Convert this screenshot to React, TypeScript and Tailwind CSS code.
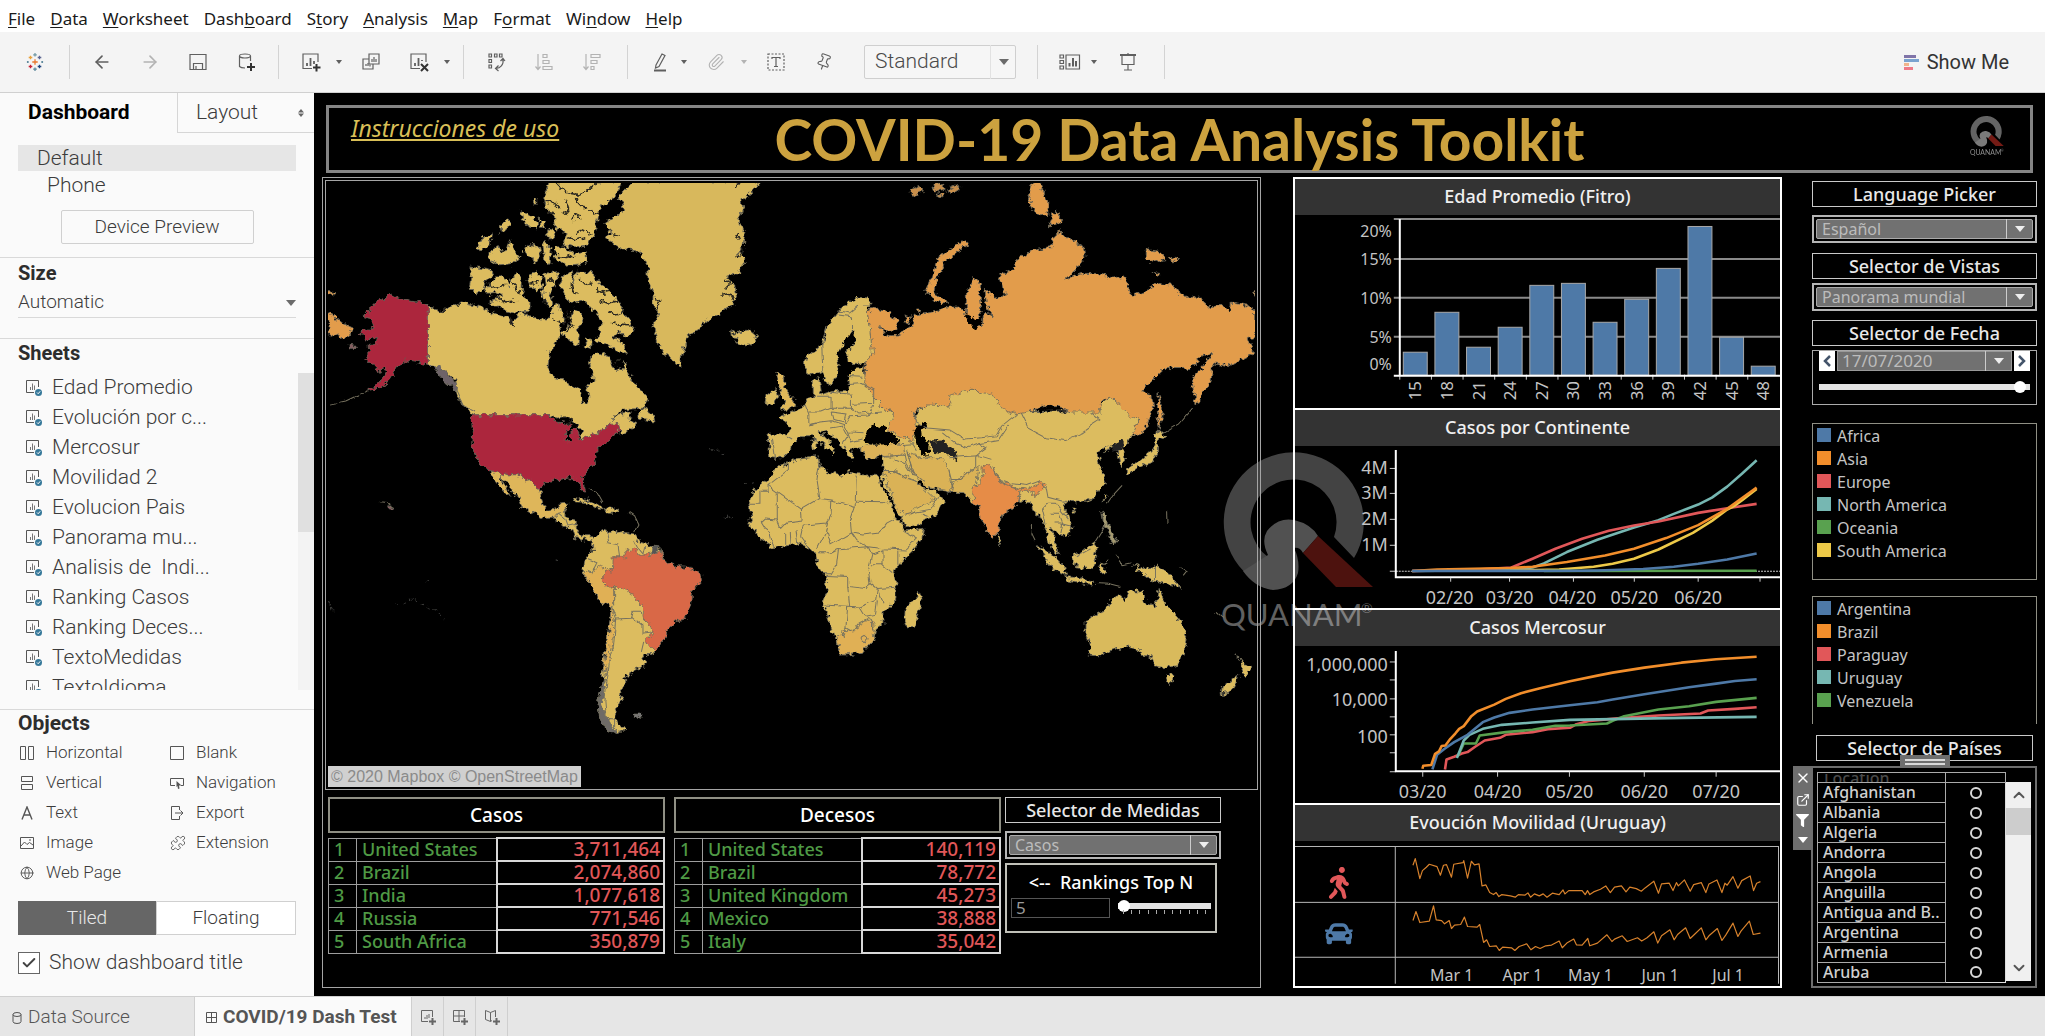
import React from "react";
import { ArrowLeft, ArrowRight, Check, ChevronDown, ChevronUp, ExternalLink, Globe, Paperclip, Pin, Puzzle, X } from "lucide-react";
import { FaCar, FaFilter, FaWalking } from "react-icons/fa";

type Frame = { x: number; y: number; sx: number; sy: number };

const WEST: Frame = { x: 310, y: 175, sx: 3, sy: 2.529 };
const EAST: Frame = { x: 720, y: 175, sx: 2.703, sy: 2.529 };
const UPPER: Frame = { x: 1200, y: 175, sx: 2.613, sy: 3 };
const LOWER: Frame = { x: 1200, y: 600, sx: 2.613, sy: 3 };

function place(points: string, f: Frame) {
  return points
    .split(" ")
    .map((p) => {
      const [x, y] = p.split(",").map(Number);
      return `${(f.x + x / f.sx).toFixed(1)},${(f.y + y / f.sy).toFixed(1)}`;
    })
    .join(" ");
}

const YELLOW = "#dcbc5e";
const ORANGE = "#e29c4c";
const RED = "#ac283e";

const westLand: [string, string][] = [
  ["357,330 395,348 425,332 460,322 490,330 520,338 560,352 590,360 605,375 620,362 640,350 680,365 720,365 730,345 735,330 745,325 755,345 762,355 765,372 745,390 755,405 735,425 720,450 715,490 735,515 765,520 790,535 812,540 818,575 832,578 838,560 832,535 850,520 850,500 838,480 845,455 865,450 885,455 900,462 908,480 920,495 935,490 945,475 955,500 975,530 1000,548 1015,575 1000,590 970,592 935,595 905,620 930,605 965,602 955,620 985,630 960,645 935,655 928,645 922,628 895,636 880,648 850,656 835,662 808,672 820,650 808,640 785,620 765,612 740,615 712,607 500,607 480,600 455,575 440,545 440,520 400,490 357,480", YELLOW],
  ["985,618 985,605 1008,587 1015,600 1035,608 1038,625 1010,620", YELLOW],
  ["485,232 515,235 545,240 550,255 530,270 525,290 500,302 480,285 485,260", YELLOW],
  ["525,292 550,270 570,255 590,265 600,285 605,262 620,250 635,262 635,285 640,300 662,325 660,345 620,350 590,345 575,335 545,335 545,318 580,308 560,298 535,300", YELLOW],
  ["655,262 680,245 700,262 695,290 680,298 660,280", YELLOW],
  ["705,250 745,245 735,280 720,300 730,320 728,335 705,325 700,295 710,275", YELLOW],
  ["752,280 760,255 785,245 792,275 800,247 850,248 860,265 890,285 920,310 940,345 970,385 960,410 930,400 910,408 945,430 950,455 920,445 890,430 860,415 875,400 870,385 880,370 850,340 820,320 790,325 765,310", YELLOW],
  ["790,340 815,350 820,375 800,390 812,405 808,435 790,425 770,410 755,400 780,385 785,360", YELLOW],
  ["825,415 848,420 845,440 828,435", YELLOW],
  ["720,17 938,17 925,40 900,70 870,85 865,120 855,150 835,180 800,185 760,180 770,150 735,130 730,100 710,85 703,60", YELLOW],
  ["735,182 760,184 790,198 830,195 830,225 760,230 740,215", YELLOW],
  ["632,92 660,100 680,115 682,140 655,130 640,115", YELLOW],
  ["572,130 600,112 600,128 575,150", YELLOW],
  ["500,190 520,160 550,150 542,175 510,195", YELLOW],
  ["540,205 560,180 590,195 600,170 615,195 632,210 610,225 570,228 545,220", YELLOW],
  ["640,185 665,175 690,185 695,205 680,220 655,205", YELLOW],
  ["700,170 725,185 722,225 705,215", YELLOW],
  ["690,110 712,120 705,135 690,130", YELLOW],
  ["715,140 740,145 735,160 715,160", YELLOW],
  ["675,62 685,62 685,75 675,75", YELLOW],
  ["1350,17 1320,50 1295,65 1300,90 1285,110 1305,150 1300,180 1285,200 1305,215 1290,245 1250,260 1275,280 1280,310 1270,330 1230,350 1190,370 1165,395 1135,405 1120,440 1110,485 1090,470 1065,455 1045,425 1030,380 1050,350 1030,330 1030,300 1015,270 1015,235 1000,210 980,190 930,188 890,160 905,140 885,125 945,90 940,70 925,60 975,17", "#d8b85c"],
  ["1262,392 1280,405 1290,395 1320,390 1340,405 1330,425 1300,435 1275,425 1285,412 1265,410", YELLOW],
  ["57,345 100,375 132,388 115,410 105,418 80,402 57,410", ORANGE],
  ["57,296 74,298 74,304 60,308", ORANGE],
  ["545,748 595,758 635,758 650,775 670,772 680,792 692,797 695,820 710,850 735,848 750,832 775,830 768,850 750,860 735,868 705,868 665,852 635,835 630,820 610,800 590,775 570,760 590,790 602,815 590,808 570,785 550,765", "#deb65a"],
  ["735,868 750,855 765,852 768,868 800,875 800,900 815,912 850,912 848,925 820,922 795,915 785,895 760,885", YELLOW],
  ["792,826 808,818 832,820 862,832 885,845 862,842 830,828", YELLOW],
  ["885,847 900,842 922,846 930,855 895,855", YELLOW],
  ["848,920 870,905 890,895 905,905 935,902 975,908 990,928 1030,938 1050,945 1060,970 1100,1100 1040,1200 1030,1212 1000,1212 1005,1225 1005,1240 970,1250 965,1265 945,1270 945,1290 930,1310 938,1325 922,1345 915,1370 925,1390 950,1402 925,1412 890,1400 870,1370 865,1330 878,1280 880,1240 895,1180 905,1092 870,1075 840,1030 820,1005 825,980 835,965 850,950", YELLOW],
  ["850,1005 865,985 905,1000 877,1022 890,1038 912,1045 912,1085 905,1092 870,1075 840,1030 822,1005 835,1000", "#e0b055"],
  ["905,1092 915,1125 905,1190 895,1250 880,1290 892,1240 880,1260 882,1230 895,1180", "#e0b055"],
  ["908,965 945,965 950,950 980,942 990,962 1030,958 1050,947 1060,975 1100,990 1140,992 1175,1010 1178,1025 1145,1055 1142,1090 1125,1122 1095,1130 1072,1150 1070,1165 1038,1202 1005,1180 1030,1155 1025,1140 1000,1120 998,1090 980,1075 975,1062 940,1045 915,1045 890,1038 877,1022 890,1005 905,1000", "#d96846"],
  ["357,330 330,322 300,320 270,315 240,302 215,318 195,328 182,345 162,352 170,364 195,368 200,382 185,388 155,400 170,416 205,412 200,428 180,432 182,450 168,462 185,478 200,485 205,500 235,490 225,512 200,530 175,547 215,538 240,520 262,490 290,468 320,472 357,480", RED],
  ["500,607 712,607 740,625 790,630 785,636 772,650 770,672 782,672 785,645 800,640 810,655 805,672 835,662 850,656 880,648 895,636 910,628 922,628 930,648 915,655 905,668 880,685 870,685 862,700 855,715 858,730 830,750 818,765 828,800 815,795 803,770 780,765 755,770 735,772 705,778 692,797 680,792 670,772 650,775 635,758 595,758 545,748 518,735 497,705 487,685 490,655 487,625 485,612", RED],
  ["365,480 400,488 442,530 440,546 410,525 385,500", "#6e6468"],
  ["865,1330 878,1280 884,1285 878,1340 892,1372 925,1412 890,1400 870,1370", "#6e6a66"],
  ["1030,938 1045,940 1040,956 1028,956", "#555"],
  ["972,1362 998,1362 992,1370 976,1370", "#777"],
  ["236,836 254,840 250,846 240,844", "#8a5a62"],
  ["120,432 142,434 140,440 124,438", "#8a5a62"],
];

const fjords = [
  "740,20 765,45 800,50 835,42 860,20",
  "705,70 735,72 745,85",
  "715,95 740,100",
  "770,62 780,85 765,100",
  "800,60 812,82 830,85",
  "790,120 800,100 820,110",
  "800,150 820,140 845,150",
  "870,95 848,100 840,90",
  "775,160 800,165 830,160",
  "745,205 770,210 800,205",
  "530,275 560,285 590,280",
  "560,310 590,322 620,320",
  "610,270 622,290 640,300",
  "660,275 685,270",
  "715,262 730,275",
  "785,275 790,295 810,300",
  "810,262 830,280 850,275",
  "860,290 880,300 905,295",
  "870,320 900,325 925,320",
  "890,345 915,355 940,350",
  "910,375 935,378 965,380",
  "770,345 790,380 770,400",
  "735,365 760,378 780,360",
  "600,365 612,385",
  "400,350 410,338",
  "440,335 455,325",
  "1240,262 1262,275 1245,290",
  "1235,305 1262,300 1272,318",
  "1290,150 1280,165",
  "1300,190 1282,212",
  "1275,30 1285,17",
  "1035,310 1050,320 1040,340",
  "905,150 930,155",
  "915,480 930,465",
  "765,612 790,622 770,628",
];

const islets = [
  "1200,692 1212,696 1230,700 1248,712",
  "1305,780 1325,782 1342,780",
  "1248,862 1260,870 1270,866",
  "738,972 750,978",
  "260,1085 290,1082 310,1070 330,1080 350,1092 380,1100 405,1125",
  "355,1025 375,1038",
  "58,1078 70,1100",
];

const westBorders = [
  "175,547 140,560 110,572 65,580",
  "890,897 898,930 925,935 930,965 908,965",
  "975,925 985,942 1000,958 1005,938",
  "830,968 865,980 850,1005 835,1000",
  "912,1045 912,1085 905,1092 918,1122 965,1120 970,1103 995,1103 998,1118",
  "965,1115 1000,1140 1000,1158 1030,1155",
  "918,1122 912,1190 900,1230 892,1280 886,1330 890,1370 915,1372 915,1398",
  "1005,1180 998,1205",
  "735,868 750,855 768,868 775,885 800,880",
  "835,790 860,800 880,830",
  "955,852 972,862 985,885 975,900",
  "440,545 460,580 500,600",
  "212,826 230,828 248,840",
];

const eastLand: [string, string][] = [
  ["185,730 200,720 265,712 272,735 285,750 305,755 330,762 345,750 370,758 430,760 432,780 455,820 470,860 485,875 498,900 520,898 550,893 545,920 520,950 480,985 468,1005 475,1030 475,1075 440,1105 440,1135 420,1150 415,1175 385,1205 350,1212 325,1213 315,1180 300,1150 290,1110 278,1085 290,1045 285,1010 262,985 258,950 240,945 215,932 195,935 145,942 110,920 78,885 85,870 78,830 95,795 130,770 150,740", YELLOW],
  ["500,1095 525,1075 538,1052 543,1075 525,1140 505,1142 498,1120", YELLOW],
  ["313,1165 333,1168 335,1150 360,1155 375,1135 400,1122 412,1125 415,1175 385,1205 350,1212 325,1213", "#e0b055"],
  ["130,658 180,660 190,640 165,610 200,598 230,580 235,565 252,560 252,520 268,515 275,555 300,548 340,548 350,530 345,505 355,490 388,488 400,540 440,590 470,605 520,660 530,600 620,545 740,545 800,600 1020,595 1050,560 1130,615 1115,660 1090,690 1092,725 1080,738 1072,700 1060,690 1035,700 1045,685 1020,700 1022,718 1030,750 1040,780 1010,815 975,828 950,825 928,835 945,870 950,895 930,915 905,900 890,890 905,925 912,960 895,945 880,900 865,860 850,865 840,830 825,825 800,830 755,865 750,895 735,920 705,870 700,835 685,830 680,815 655,803 620,802 560,790 540,768 530,770 545,790 580,800 590,810 607,825 585,855 540,880 500,890 490,870 470,830 445,790 435,765 440,745 440,712 400,715 380,700 380,688 352,690 360,722 345,712 330,682 300,660 285,645 270,650 285,665 312,690 305,708 288,690 250,662 215,662 195,680 190,695 165,718 135,715", YELLOW],
  ["380,688 440,678 495,682 500,708 440,712 400,716 380,702", "#dcb258"],
  ["505,700 545,715 600,715 618,745 625,800 560,790 520,750", "#dab257"],
  ["440,750 470,750 530,775 580,820 500,860 480,850", "#dab257"],
  ["630,775 700,735 685,830 655,803 620,802", "#dab257"],
  ["397,345 415,335 450,345 480,370 475,390 445,392 430,385 450,408 470,410 480,405 520,380 525,355 560,350 590,345 610,335 645,335 665,352 665,300 685,258 700,275 700,310 705,350 690,385 708,380 712,345 735,360 720,335 715,290 740,310 770,305 755,255 790,240 800,215 850,190 895,185 900,160 920,145 940,165 980,180 985,210 960,240 930,265 975,250 1020,250 1060,262 1090,255 1110,305 1150,295 1180,275 1220,280 1250,310 1300,310 1315,335 1360,330 1375,345 1380,325 1420,330 1445,345 1445,410 1425,415 1440,450 1400,470 1370,485 1330,478 1325,520 1285,585 1275,530 1280,510 1330,450 1300,460 1270,490 1200,490 1140,545 1165,560 1170,590 1140,655 1110,660 1130,620 1105,610 1070,575 1050,560 1030,575 1025,600 950,600 885,580 850,595 800,605 760,590 740,560 680,542 620,560 620,585 560,582 522,600 530,625 520,675 490,662 455,645 470,605 440,590 415,560 390,525 395,480 410,450 405,400", ORANGE],
  ["555,295 575,250 590,210 620,190 660,165 672,175 640,195 605,225 585,265 580,300 615,322 600,325 570,310", ORANGE],
  ["1182,550 1195,600 1185,645 1180,600", ORANGE],
  ["845,20 865,20 885,75 885,105 850,95 832,60", ORANGE],
  ["905,90 925,118 885,135", ORANGE],
  ["1150,190 1190,195 1200,215 1165,222 1150,210", ORANGE],
  ["1212,208 1240,215 1222,222", ORANGE],
  ["1168,248 1190,250 1185,260", ORANGE],
  ["510,40 540,32 550,42 525,55", "#c98f4c"],
  ["575,30 600,22 605,38 580,42", "#c98f4c"],
  ["610,40 640,28 648,34 625,48", "#c98f4c"],
  ["580,50 605,48 600,60", "#c98f4c"],
  ["530,340 542,340 538,350", ORANGE],
  ["500,355 515,360 510,380 500,375", ORANGE],
  ["1440,298 1446,296 1446,308", ORANGE],
  ["228,470 240,455 275,430 290,380 320,345 370,310 405,312 408,330 397,345 405,400 412,450 395,475 345,478 345,445 370,420 355,400 335,425 315,455 322,490 305,525 290,530 278,500 240,508 230,490", YELLOW],
  ["150,500 175,510 175,540 205,580 200,590 165,595 175,570 160,560 165,535", "#e0b85a"],
  ["125,555 150,540 155,560 145,580 122,580", YELLOW],
  ["248,668 262,668 262,692 252,692", YELLOW],
  ["750,905 762,925 755,935", YELLOW],
  ["700,835 685,825 680,790 700,780 710,760 710,735 735,732 742,755 755,772 800,790 830,795 865,775 880,785 855,812 835,800 810,800 805,830 755,865 750,895 735,920 705,870", "#e68c46"],
  ["985,1125 1040,1100 1060,1070 1080,1062 1095,1075 1105,1050 1140,1052 1140,1075 1175,1090 1185,1045 1205,1090 1225,1110 1245,1135 1262,1165 1255,1200 1235,1240 1200,1245 1170,1240 1160,1215 1140,1215 1130,1200 1100,1190 1060,1200 1020,1215 995,1213 1000,1190 985,1150", "#d9ba5c"],
  ["1200,1262 1225,1265 1215,1288", YELLOW],
  ["1395,1212 1415,1235 1435,1240 1418,1270 1405,1255 1412,1240", YELLOW],
  ["1400,1262 1395,1280 1375,1310 1352,1312 1355,1295", YELLOW],
  ["855,937 885,950 930,990 935,1012 910,1005 880,970", YELLOW],
  ["930,1015 970,1018 1010,1028 1000,1034 935,1024", YELLOW],
  ["950,965 985,945 1008,930 1018,945 1005,995 960,990", YELLOW],
  ["1020,985 1050,975 1030,988 1045,1005 1030,1008", YELLOW],
  ["1115,985 1140,995 1175,990 1215,1010 1240,1042 1190,1030 1165,1025 1130,1000", YELLOW],
  ["1030,850 1042,855 1045,878 1072,925 1060,937 1045,900 1035,885", "#a59a70"],
  ["1178,645 1205,658 1180,672 1180,705 1165,728 1130,738 1100,758 1098,742 1140,720 1168,695", YELLOW],
  ["1035,805 1042,812 1034,825", YELLOW],
  ["948,842 964,843 955,854", YELLOW],
];

const seas: [string, string][] = [
  ["390,672 397,645 415,632 430,640 440,632 448,645 475,660 485,678 440,682 405,682", "#000"],
  ["522,640 550,628 562,632 540,655 565,675 560,712 540,705 530,680", "#000"],
  ["565,675 600,672 640,700 640,725 615,705 575,700", "#222"],
  ["1050,690 1085,668 1095,690 1072,700", "#222"],
  ["316,455 335,425 350,402 366,405 360,425 342,445 345,480 390,478 388,488 355,492 340,540 310,535 322,490", "#000"],
  ["660,352 705,370 690,390 675,382", "#000"],
];

const eastBorders = [
  "185,730 185,745 130,785 130,800 108,800 108,830 80,830",
  "130,785 220,845 270,818 262,770 268,735 262,712",
  "155,805 155,872 120,870 108,880",
  "220,845 222,875 180,880 165,895 155,872",
  "270,818 302,822 365,838 368,758",
  "368,825 450,826",
  "302,822 300,860 290,880 225,885",
  "365,838 352,875 355,905 300,935 290,905",
  "110,880 120,895 135,905 145,942",
  "175,905 175,935",
  "190,900 192,935",
  "205,895 210,932",
  "225,885 218,915 240,945",
  "290,880 285,905 265,940",
  "355,905 385,910 430,905 450,880 470,870",
  "320,945 400,940 440,945 500,948 530,920 495,900",
  "355,905 370,925 400,940",
  "265,955 300,955 320,945 315,985 300,1008 280,1008",
  "400,940 410,960 400,1000 405,1030 395,1045 345,1040 345,1015 290,1012",
  "410,985 440,985 465,1005",
  "410,960 440,950 440,985",
  "480,950 480,985",
  "278,1087 345,1090 375,1092 420,1075 425,1045 475,1042",
  "345,1040 350,1090",
  "405,1030 425,1045 440,1080",
  "345,1090 340,1145 333,1168",
  "375,1092 390,1115 412,1125",
  "390,1115 420,1110 425,1075",
  "340,1145 360,1155 375,1135 400,1122",
  "384,1170 392,1166 400,1172 392,1182 384,1176 384,1170",
  "412,1125 412,1150 420,1150",
  "142,665 150,715",
  "180,660 195,668",
  "230,582 240,605 240,632 262,628",
  "265,560 300,560 300,590 275,600 240,600",
  "240,632 270,625 300,622 335,632 350,612 400,610 415,580",
  "300,550 355,555 355,590 300,590",
  "355,590 375,605 440,600",
  "345,530 385,528 415,545 415,575 360,578",
  "345,510 385,512",
  "300,600 340,605 335,625 305,618 300,600",
  "335,632 345,650 390,652",
  "345,650 355,675 385,668",
  "300,640 330,635 345,660 330,680",
  "290,380 275,430 278,500",
  "320,355 358,360 358,400",
  "320,345 350,350 375,330 405,330",
  "495,682 520,680 530,695",
  "440,712 500,708 505,730 525,760",
  "440,750 470,750 500,765 530,775",
  "470,720 500,730 520,760",
  "500,860 530,852 570,845 590,815",
  "545,855 560,860",
  "505,700 520,750 550,775",
  "522,600 530,625 560,640 620,645 660,668 705,665 745,660 760,635 800,605",
  "600,650 640,680 670,690 700,680 750,672 780,630",
  "618,715 660,712 700,710 735,720",
  "618,745 625,770 650,770 690,740 690,712",
  "625,800 630,775",
  "690,712 705,700 720,690 700,680",
  "810,602 830,640 880,665 930,672 970,655 1000,635 1025,620 1000,600",
  "735,732 755,772 780,780 830,785 860,775 880,790",
  "755,772 770,785 805,795",
  "810,800 808,828",
  "880,790 885,815 925,825 935,822",
  "870,845 885,830 905,830 940,870",
  "870,845 880,885",
  "890,855 915,855 925,880 945,885",
  "900,880 925,880 920,905",
  "1175,990 1175,1025",
  "960,965 1000,945",
  "1195,655 1240,630 1275,590",
  "1010,930 1030,900 1040,880",
  "1340,1105 1358,1120",
  "1240,990 1260,1000 1250,1012",
  "1085,785 1060,810 1045,830",
  "840,885 842,910 850,925",
  "1205,850 1206,880",
  "1065,960 1085,985 1110,980",
  "1015,1030 1045,1032 1080,1040",
];

function WorldMap() {
  return (
    <svg className="block h-full w-full" viewBox="329 182 925 606" preserveAspectRatio="xMidYMid slice" role="img" aria-label="World map of cases">
      <defs>
        <filter id="coast" x="0" y="0" width="100%" height="100%">
          <feTurbulence type="fractalNoise" baseFrequency="0.18" numOctaves="3" seed="4" result="n" />
          <feDisplacementMap in="SourceGraphic" in2="n" scale="8" xChannelSelector="R" yChannelSelector="G" />
        </filter>
        <filter id="border" x="0" y="0" width="100%" height="100%">
          <feTurbulence type="fractalNoise" baseFrequency="0.1" numOctaves="2" seed="9" result="n" />
          <feDisplacementMap in="SourceGraphic" in2="n" scale="5" xChannelSelector="R" yChannelSelector="G" />
        </filter>
      </defs>
      <g filter="url(#coast)" stroke="#6d6a5c" strokeWidth="0.8" strokeLinejoin="round">
        {westLand.map(([p, c], i) => (
          <polygon key={i} points={place(p, WEST)} fill={c} />
        ))}
        {fjords.map((p, i) => (
          <polyline key={i} points={place(p, WEST)} fill="none" stroke="#2a2820" strokeWidth="1.6" />
        ))}
        {islets.map((p, i) => (
          <polyline key={i} points={place(p, WEST)} fill="none" stroke="#3c3c3a" strokeWidth="1" strokeDasharray="3 4" />
        ))}
        {eastLand.map(([p, c], i) => (
          <polygon key={i} points={place(p, EAST)} fill={c} />
        ))}
        {seas.map(([p, c], i) => (
          <polygon key={i} points={place(p, EAST)} fill={c} stroke="none" />
        ))}
      </g>
      <g filter="url(#border)" fill="none" stroke="#77725f" strokeWidth="1">
        {westBorders.map((p, i) => (
          <polyline key={i} points={place(p, WEST)} />
        ))}
        {eastBorders.map((p, i) => (
          <polyline key={i} points={place(p, EAST)} />
        ))}
      </g>
    </svg>
  );
}

function Series({ d, f, color, w = 2.6 }: { d: string; f: Frame; color: string; w?: number }) {
  return <polyline points={place(d, f)} fill="none" stroke={color} strokeWidth={w} strokeLinejoin="round" />;
}

const BLUE = "#4e79a7";
const ORG = "#f28e2b";
const CORAL = "#e15759";
const TEAL = "#76b7b2";
const GREEN = "#59a14f";
const GOLD = "#edc948";

function AgeChart() {
  const tops = [352, 312, 347, 327, 285, 283, 322, 299, 268, 226, 337, 366];
  return (
    <svg className="block w-full" viewBox="1295 215 486 193" role="img" aria-label="Edad Promedio">
      {[219, 259, 298, 337].map((y) => (
        <line key={y} x1="1394" x2="1781" y1={y} y2={y} stroke="#8a8a8a" strokeWidth="2" />
      ))}
      {tops.map((t, i) => (
        <g key={i}>
          <rect x={1403.5 + i * 31.7} y={t + 0.5} width="24" height={375 - t} fill={BLUE} stroke="#a9a9a9" />
          <line x1={1400 + i * 31.7} x2={1400 + i * 31.7} y1="375" y2="380" stroke="#ccc" />
          <text transform={`translate(${1421.5 + i * 31.7} 391) rotate(-90)`} textAnchor="middle" fontSize="17" fill="#c4c4c4">
            {15 + i * 3}
          </text>
        </g>
      ))}
      <path d="M1400 219V376M1394 376H1781" stroke="#fff" strokeWidth="2" />
      {[["20%", 231], ["15%", 259], ["10%", 298], ["5%", 337], ["0%", 364]].map(([t, y]) => (
        <text key={t} x="1392" y={Number(y) + 6} textAnchor="end" fontSize="16" fill="#c4c4c4">{t}</text>
      ))}
    </svg>
  );
}

function ContinentChart() {
  return (
    <svg className="block w-full" viewBox="1295 446 486 163" role="img" aria-label="Casos por Continente">
      {[468, 493, 519, 545, 571].map((y) => (
        <line key={y} x1="1390" x2="1396" y1={y + 0.5} y2={y + 0.5} stroke="#ccc" />
      ))}
      <line x1="1396" x2="1781" y1="571.5" y2="571.5" stroke="#ccc" strokeDasharray="2 1" />
      <Series f={UPPER} color={TEAL} d="555,1189 811,1186 870,1178 900,1166 960,1132 1040,1095 1136,1058 1200,1036 1240,1017 1304,989 1340,968 1380,935 1420,895 1457,856" />
      <Series f={UPPER} color={CORAL} d="555,1189 700,1186 815,1178 870,1152 930,1122 1000,1092 1070,1068 1136,1052 1200,1040 1304,1014 1380,1000 1457,987" />
      <Series f={UPPER} color={GOLD} d="811,1188 940,1184 1030,1176 1080,1167 1136,1152 1200,1124 1290,1074 1340,1038 1380,1004 1400,992 1420,975 1457,942" />
      <Series f={UPPER} color={ORG} d="555,1189 620,1184 811,1180 870,1176 960,1162 1060,1142 1136,1122 1220,1090 1304,1051 1380,1002 1457,938" />
      <Series f={UPPER} color={GREEN} d="900,1189 1457,1188" />
      <Series f={UPPER} color={BLUE} d="555,1189 1000,1188 1040,1187 1160,1183 1240,1176 1304,1167 1380,1154 1457,1136" />
      <path d="M1396 450V578M1395 577.5H1781" stroke="#fff" strokeWidth="2" />
      {[1451, 1510, 1574, 1635, 1699, 1761].map((x) => (
        <line key={x} x1={x} x2={x} y1="578" y2="582" stroke="#ccc" />
      ))}
      {[["4M", 468], ["3M", 493], ["2M", 519], ["1M", 545]].map(([t, y]) => (
        <text key={t} x="1388" y={Number(y) + 6} textAnchor="end" fontSize="18" fill="#c4c4c4">{t}</text>
      ))}
      {[["02/20", 1450], ["03/20", 1510], ["04/20", 1573], ["05/20", 1635], ["06/20", 1699]].map(([t, x]) => (
        <text key={t} x={x} y="604" textAnchor="middle" fontSize="18" fill="#c4c4c4">{t}</text>
      ))}
    </svg>
  );
}

function MercosurChart() {
  return (
    <svg className="block w-full" viewBox="1295 647 486 157" role="img" aria-label="Casos Mercosur">
      {[663, 681, 700, 718, 736, 754, 773].map((y) => (
        <line key={y} x1="1390" x2="1396" y1={y} y2={y} stroke="#ccc" />
      ))}
      <Series f={LOWER} color={CORAL} d="641,512 645,482 665,474 685,464 700,460 720,444 745,425 785,417 800,408 870,400 910,391 968,387 985,376 1020,366 1100,358 1200,350 1310,344 1330,335 1400,330 1457,325" />
      <Series f={LOWER} color={GREEN} d="675,472 690,434 722,434 732,410 800,400 870,393 930,381 968,380 1065,374 1080,366 1110,352 1163,340 1200,332 1280,322 1351,309 1457,297" />
      <Series f={LOWER} color={TEAL} d="672,478 680,455 690,425 705,408 740,390 790,378 870,371 968,363 1080,361 1260,357 1457,354" />
      <Series f={LOWER} color={BLUE} d="608,512 620,468 640,450 665,430 700,408 740,370 770,356 810,342 870,332 968,319 1040,310 1080,302 1163,286 1280,265 1351,254 1400,246 1457,241" />
      <Series f={LOWER} color={ORG} d="582,510 584,501 605,499 615,465 625,458 632,442 642,440 655,420 668,404 678,390 690,382 710,352 725,338 770,317 800,300 840,283 890,268 968,247 1040,230 1080,221 1163,206 1260,191 1351,181 1457,173" />
      <path d="M1396 652V773M1395 772.5H1781" stroke="#fff" strokeWidth="2" />
      {[["03/20", 1423], ["04/20", 1498], ["05/20", 1570], ["06/20", 1645], ["07/20", 1717]].map(([t, x]) => (
        <g key={t}>
          <line x1={x} x2={x} y1="773" y2="778" stroke="#ccc" />
          <text x={x} y="799" textAnchor="middle" fontSize="18" fill="#c4c4c4">{t}</text>
        </g>
      ))}
      {[["1,000,000", 672], ["10,000", 707], ["100", 744]].map(([t, y]) => (
        <text key={t} x="1388" y={y} textAnchor="end" fontSize="18" fill="#c4c4c4">{t}</text>
      ))}
    </svg>
  );
}

function MobilityChart() {
  return (
    <svg className="block w-full" viewBox="1295 841 486 144" role="img" aria-label="Evolución Movilidad">
      <path d="M1295 846.500H1780M1295 902.500H1780M1295 957.500H1780M1395.500 847V984M1779.500 847V984" fill="none" stroke="#b8b8b8" />
      <Series w={1.2} f={LOWER} color="#d8822c" d="557,796 563,776 575,836 582,812 592,802 600,793 620,800 629,826 637,796 645,794 658,832 664,793 688,788 690,782 700,835 710,784 718,795 730,792 738,858 748,855 758,878 768,884 775,878 782,890 790,884 812,888 825,892 833,884 850,886 858,879 865,892 875,882 888,888 898,882 908,892 922,880 940,884 950,870 955,882 965,872 1000,872 1008,884 1014,872 1020,884 1030,876 1048,868 1062,858 1074,878 1085,862 1103,858 1115,876 1125,862 1142,866 1155,874 1165,864 1188,844 1200,880 1208,852 1228,850 1238,872 1247,848 1252,858 1268,840 1283,874 1292,854 1312,848 1324,878 1332,852 1353,840 1366,878 1374,850 1380,856 1395,830 1408,865 1418,842 1440,828 1449,872 1457,850 1467,845" />
      <Series w={1.2} f={LOWER} color="#d8822c" d="557,962 565,935 575,968 600,964 611,918 618,960 632,962 640,972 652,962 658,986 666,976 682,974 692,952 700,980 725,982 732,974 742,1028 750,1020 758,1040 775,1038 783,1052 792,1042 815,1044 824,1052 835,1040 855,1032 866,1050 878,1040 890,1046 905,1038 920,1036 940,1024 948,1044 960,1030 978,1018 985,1035 1000,1036 1015,1016 1020,1038 1040,1030 1065,1005 1078,1025 1085,1018 1105,1008 1118,1025 1145,1014 1156,1024 1170,1014 1188,996 1198,1030 1208,1008 1230,990 1241,1020 1250,1004 1271,984 1283,1016 1294,1004 1312,984 1324,1020 1332,1008 1354,986 1366,1022 1376,1006 1395,970 1408,1010 1416,994 1438,964 1448,1004 1467,1000" />
      <FaWalking x={1323} y={867} size={32} color={CORAL} />
      <FaCar x={1325} y={920} size={28} color={BLUE} />
      {[["Mar 1", 1452], ["Apr 1", 1523], ["May 1", 1591], ["Jun 1", 1661], ["Jul 1", 1729]].map(([t, x]) => (
        <text key={t} x={x} y="981" textAnchor="middle" fontSize="16" fill="#c4c4c4">{t}</text>
      ))}
    </svg>
  );
}

function QuanamLogo({ className }: { className: string }) {
  return (
    <svg className={className} viewBox="1218 448 164 184" role="img" aria-label="Quanam">
      <path d="M1267 587A70 70 0 1 1 1354 558L1334 537A43 43 0 1 0 1268 557Q1277 592 1267 587Z" fill="#434343" />
      <path d="M1243 571L1268 555Q1261 541 1267 531Q1278 517 1294 520Q1311 524 1318 536L1303 553Q1300 547 1294 548Q1300 560 1298 573Q1293 589 1273 590Q1255 588 1243 571Z" fill="#515151" />
      <path d="M1318 536L1373 587H1336L1303 553Z" fill="#4d120e" />
      <text x="1221" y="626" fontSize="31" fill="#606060" fontFamily="Lato">QUANAM</text>
      <text x="1361" y="613" fontSize="14" fill="#606060" fontFamily="Lato">®</text>
    </svg>
  );
}

function Caret({ className = "text-[#6b6b6b]" }: { className?: string }) {
  return (
    <svg className={`h-[6px] w-[10px] shrink-0 ${className}`} viewBox="0 0 10 6" aria-hidden="true">
      <path d="M0 0H10L5 6Z" fill="currentColor" />
    </svg>
  );
}

function Glyph({ children, dim = false }: { children: React.ReactNode; dim?: boolean }) {
  return (
    <svg className={dim ? "size-5 text-[#b3b3b3]" : "size-5 text-[#5f5f5f]"} viewBox="0 0 20 20" fill="none" stroke="currentColor" strokeWidth="1.2" aria-hidden="true">
      {children}
    </svg>
  );
}

function Tool({ label, children }: { label: string; children: React.ReactNode }) {
  return (
    <button type="button" aria-label={label} className="flex h-8 w-8 shrink-0 items-center justify-center">
      {children}
    </button>
  );
}

function Drop({ label, dim = false }: { label: string; dim?: boolean }) {
  return (
    <button type="button" aria-label={label} className="flex h-8 w-4 shrink-0 items-center justify-center">
      <svg className={dim ? "h-1 w-[6px] text-[#b3b3b3]" : "h-1 w-[6px] text-[#5f5f5f]"} viewBox="0 0 6 4"><path d="M0 0H6L3 4Z" fill="currentColor" /></svg>
    </button>
  );
}

function Divider() {
  return <div className="h-[34px] w-px shrink-0 bg-[#d3d3d3]" />;
}

const tableauMarks: [number, number, number, string][] = [
  [10, 10, 3, "#e8762c"], [5, 5, 2, "#e8a23c"], [15, 5, 2, "#5b6591"], [5, 15, 2, "#c72035"], [15, 15, 2, "#1f447e"],
  [10, 2, 2, "#7199a6"], [10, 18, 2, "#5b879b"], [2, 10, 1, "#5b879b"], [18, 10, 1, "#59879b"],
];

function Toolbar() {
  return (
    <div className="flex h-[61px] items-center border-b border-[#d0d0d0] bg-[#f4f4f4]">
      <div className="flex w-[69px] justify-center">
        <Tool label="Start page">
          <svg className="size-[18px]" viewBox="0 0 20 20" strokeWidth="1.4">
            {tableauMarks.map(([x, y, r, c], i) => (
              <path key={i} d={`M${x - r} ${y}H${x + r}M${x} ${y - r}V${y + r}`} stroke={c} />
            ))}
          </svg>
        </Tool>
      </div>
      <Divider />
      <div className="flex gap-4 px-4">
        <Tool label="Undo"><ArrowLeft className="size-5 text-[#5f5f5f]" strokeWidth={2} /></Tool>
        <Tool label="Redo"><ArrowRight className="size-5 text-[#b3b3b3]" strokeWidth={2} /></Tool>
        <Tool label="Save"><Glyph><path d="M2 2.500H18V17.500H2ZM5.500 17.500V11.500H14.500V17.500M8 17V14" /></Glyph></Tool>
        <Tool label="New data source">
          <Glyph><ellipse cx="9" cy="4" rx="5.500" ry="2" /><path d="M3.500 4V14.500Q5 16 9 16M14.500 4V9" /><path d="M15 11V19M11 15H19" strokeWidth="2" stroke="#333" /></Glyph>
        </Tool>
      </div>
      <Divider />
      <div className="flex pl-4 pr-2">
        <Tool label="New worksheet"><Glyph><path d="M11 16.500H2V2H17V10" /><path d="M6 14V11M9.500 14V6M13 12V9" strokeWidth="1.800" /><path d="M15.500 12V19.500M12 15.500H19.500" strokeWidth="2" stroke="#333" /></Glyph></Tool>
        <div className="ml-1"><Drop label="New options" /></div>
        <div className="ml-2"><Tool label="Duplicate"><Glyph><path d="M8 2H18V12H8ZM8 7H2V17H12V12" /><path d="M11 10V7M13 10V5M15 10V7M5 14V12M7 14V11M9 14.500V12.500" /></Glyph></Tool></div>
        <div className="ml-4"><Tool label="Clear sheet"><Glyph><path d="M11 16.500H2V2H17V10" /><path d="M6 14V11M9.500 14V6M13 9V8" strokeWidth="1.800" /><path d="M12 12L19 19M19 12L12 19" strokeWidth="2" stroke="#333" /></Glyph></Tool></div>
        <div className="ml-1"><Drop label="Clear options" /></div>
      </div>
      <Divider />
      <div className="flex gap-4 px-4">
        <Tool label="Swap"><Glyph><path d="M3 2H5.500V5H3ZM8.500 2H11V5H8.500ZM13.500 2H16V5H13.500ZM3 7.500H5.500V10.500H3ZM3 13H5.500V16H3ZM17 7C18 13 14 16 10 16.500M14.500 9L17 6.500L19 9M12.500 13.500L9.500 16.500L12.500 19" /></Glyph></Tool>
        <Tool label="Sort ascending"><Glyph dim><path d="M4 2V17M1.500 14.500L4 17.500L6.500 14.500M9 2.500H13V5.500H9ZM9 8.500H15V11.500H9ZM9 14.500H18V17.500H9Z" /></Glyph></Tool>
        <Tool label="Sort descending"><Glyph dim><path d="M4 2V17M1.500 14.500L4 17.500L6.500 14.500M9 2.500H18V5.500H9ZM9 8.500H15V11.500H9ZM9 14.500H12V17.500H9Z" /></Glyph></Tool>
      </div>
      <div className="pl-[3px]"><Divider /></div>
      <div className="flex pl-4">
        <Tool label="Highlight"><Glyph><path d="M6 13L12 2L15 3.500L9 14.500L5.500 16Z" /><path d="M4 18.500H16" strokeWidth="2" /></Glyph></Tool>
        <Drop label="Highlight options" />
        <div className="ml-2"><Tool label="Group"><Paperclip className="size-[18px] text-[#b3b3b3]" strokeWidth={1.5} /></Tool></div>
        <div className="ml-1"><Drop label="Group options" dim /></div>
        <div className="ml-2"><Tool label="Mark labels"><Glyph><rect x="2" y="2" width="16" height="16" strokeDasharray="2 1.500" /><path d="M6 7V5.500H14V7M10 5.500V14.500M8 14.500H12" /></Glyph></Tool></div>
        <div className="ml-4"><Tool label="Fix axes"><Pin className="size-[18px] rotate-[20deg] text-[#5f5f5f]" strokeWidth={1.5} /></Tool></div>
      </div>
      <div className="relative ml-6 h-[34px] w-[152px] shrink-0">
        <select aria-label="Fit" className="h-full w-full appearance-none rounded-[2px] border border-[#cfcfcf] bg-[#f6f6f6] pl-[10px] text-[21px] font-light text-[#4a4a4a]">
          <option>Standard</option>
        </select>
        <span className="pointer-events-none absolute inset-y-0 right-0 flex w-[26px] items-center justify-center border-l border-[#e2e2e2]"><Caret /></span>
      </div>
      <div className="ml-[21px] flex items-center"><Divider /></div>
      <div className="flex pl-4 pr-5">
        <Tool label="Show cards"><svg className="h-5 w-6 text-[#5f5f5f]" viewBox="0 0 24 20" fill="none" stroke="currentColor" strokeWidth="1.200"><path d="M2 3H5.500V6H2ZM2 8.500H5.500V11.500H2ZM2 14H5.500V17H2ZM8 3H21.500V17H8Z" /><path d="M11.500 14.500V11M15 14.500V6M18 14.500V9" strokeWidth="2" /></svg></Tool>
        <Drop label="Card options" />
        <div className="ml-[10px]"><Tool label="Presentation"><Glyph><path d="M2 3H18" strokeWidth="2" /><path d="M4 3V12.500H16V3M10 1V3M10 12.500V18M6 18H14" /></Glyph></Tool></div>
      </div>
      <Divider />
      <button type="button" className="ml-auto mr-[36px] flex items-center gap-2 text-[20px] text-[#333]">
        <svg className="size-[15px]" viewBox="0 0 15 15"><path d="M0 0H12V3H0Z" fill="#8074a8" /><path d="M0 4H15V7H0Z" fill="#7ba3cf" /><path d="M0 8H5V11H0Z" fill="#f0b48c" /><path d="M0 12H9V15H0Z" fill="#ee7a87" /></svg>
        Show Me
      </button>
    </div>
  );
}

const menus = [["", "F", "ile"], ["", "D", "ata"], ["", "W", "orksheet"], ["Dash", "b", "oard"], ["S", "t", "ory"], ["", "A", "nalysis"], ["", "M", "ap"], ["F", "o", "rmat"], ["Wi", "n", "dow"], ["", "H", "elp"]];

const sheets = ["Edad Promedio", "Evolución por c...", "Mercosur", "Movilidad 2", "Evolucion Pais", "Panorama mu...", "Analisis de  Indi...", "Ranking Casos", "Ranking Deces...", "TextoMedidas", "TextoIdioma"];

function SheetIcon() {
  return (
    <svg className="size-4 shrink-0" viewBox="0 0 16 16" fill="none" aria-hidden="true">
      <path d="M8 12.500H0.500V0.500H12.500V7" stroke="#555" />
      <path d="M4.500 10V7M6.500 10V3.500M8.500 10V5.500" stroke="#777" />
      <circle cx="12.500" cy="12.500" r="3.500" fill="#37799a" />
      <path d="M11 12.500L12.200 13.700L14.200 11.300" stroke="#fff" />
    </svg>
  );
}

const objIcon = "size-[14px] text-[#555]";
const objects: [string, React.ReactNode][] = [
  ["Horizontal", <svg className={objIcon} viewBox="0 0 14 14" fill="none" stroke="currentColor"><path d="M0.500 0.500H5.500V13.500H0.500ZM8.500 0.500H13.500V13.500H8.500Z" /></svg>],
  ["Blank", <svg className={objIcon} viewBox="0 0 14 14" fill="none" stroke="currentColor"><path d="M0.500 0.500H13.500V13.500H0.500Z" /></svg>],
  ["Vertical", <svg className={objIcon} viewBox="0 0 14 14" fill="none" stroke="currentColor"><path d="M1.500 0.500H12.500V5.500H1.500ZM1.500 8.500H12.500V13.500H1.500Z" /></svg>],
  ["Navigation", <svg className={objIcon} viewBox="0 0 14 14" fill="none" stroke="currentColor"><path d="M5 9.500H0.500V2.500H13.500V9.500H11" /><path d="M6.500 5L11.500 9.500H9L9.500 12.500L8 13L7.500 10L6.500 11Z" fill="currentColor" stroke="none" /></svg>],
  ["Text", <svg className={objIcon} viewBox="0 0 14 14" fill="none" stroke="currentColor" strokeWidth="1.400"><path d="M2 13.500L7 1L12 13.500M4 9H10" /></svg>],
  ["Export", <svg className={objIcon} viewBox="0 0 14 14" fill="none" stroke="currentColor"><path d="M9.500 4V0.500H1.500V13.500H9.500V10M5 7H13M10.500 4.500L13 7L10.500 9.500" /></svg>],
  ["Image", <svg className={objIcon} viewBox="0 0 14 14" fill="none" stroke="currentColor"><path d="M0.500 1.500H13.500V12.500H0.500ZM1 10L4.500 6L7 8.500L9.500 6.500L13 9M9 4H11" /></svg>],
  ["Extension", <Puzzle className="size-4 text-[#555]" strokeWidth={1.3} />],
  ["Web Page", <Globe className="size-[14px] text-[#555]" strokeWidth={1.6} />],
];

function Sidebar() {
  return (
    <aside className="flex w-[314px] shrink-0 flex-col bg-[#fafafa] text-[20px] font-light text-[#3c3c3c]">
      <div className="flex h-10" role="tablist">
        <button type="button" role="tab" aria-selected="true" className="w-[177px] pl-[28px] text-left text-[21px] font-bold text-black">Dashboard</button>
        <button type="button" role="tab" aria-selected="false" className="flex flex-1 items-center justify-between border-b border-l border-[#d6d6d6] pl-[18px] pr-[10px] text-[21px]">
          Layout
          <svg className="h-2 w-[6px]" viewBox="0 0 6 8"><path d="M0 3.500L3 0L6 3.500ZM0 4.500H6L3 8Z" fill="#666" /></svg>
        </button>
      </div>
      <div className="px-[18px] pt-3">
        <div className="h-[26px] bg-[#e6e6e6] pl-[19px] text-[21px] leading-[26px]">Default</div>
        <div className="h-[26px] pl-[29px] text-[21px] leading-[28px]">Phone</div>
        <button type="button" className="mx-auto mt-[13px] block h-[34px] w-[193px] rounded-[2px] border border-[#d0d0d0] text-[19px]">Device Preview</button>
      </div>
      <section className="mt-[13px] border-t border-[#d9d9d9] px-[18px] pb-5">
        <h2 className="h-[30px] text-[20px] font-bold leading-[30px] text-[#2d2d2d]">Size</h2>
        <div className="relative border-b border-[#d9d9d9]">
          <select aria-label="Size" className="block h-[29px] w-full appearance-none bg-transparent text-[19px] font-light text-[#3c3c3c]"><option>Automatic</option></select>
          <span className="pointer-events-none absolute inset-y-0 right-0 flex items-center"><Caret /></span>
        </div>
      </section>
      <section className="border-t border-[#d9d9d9]">
        <h2 className="h-[34px] pl-[18px] text-[20px] font-bold leading-[29px] text-[#2d2d2d]">Sheets</h2>
        <div className="flex h-[317px] overflow-hidden">
          <ul className="flex-1 pl-[26px]">
            {sheets.map((s) => (
              <li key={s} className="flex h-[30px] items-center gap-[10px] whitespace-pre text-[21px]"><SheetIcon />{s}</li>
            ))}
          </ul>
          <div className="w-4 bg-[#f3f3f3]"><div className="h-[159px] bg-[#e0e0e0]" /></div>
        </div>
      </section>
      <section className="mt-[19px] border-t border-[#d9d9d9] px-[18px]">
        <h2 className="h-7 text-[21px] font-bold leading-[26px] text-[#2d2d2d]">Objects</h2>
        <ul className="grid grid-cols-[150px_1fr] text-[17px]">
          {objects.map(([t, icon]) => (
            <li key={t} className="flex h-[30px] items-center"><span className="flex w-7 pl-[2px]">{icon}</span>{t}</li>
          ))}
        </ul>
        <div className="mt-[13px] flex h-[34px] text-[19px]">
          <button type="button" className="flex-1 bg-[#666] text-[#e8e8e8]">Tiled</button>
          <button type="button" className="flex-1 border border-[#d0d0d0] bg-white">Floating</button>
        </div>
        <label className="mt-[14px] flex h-7 items-center gap-[9px] text-[21px]">
          <span className="relative flex size-[22px] items-center justify-center">
            <input type="checkbox" defaultChecked className="absolute inset-0 appearance-none border border-[#666] bg-white" />
            <Check className="relative size-4 text-[#444]" strokeWidth={3} />
          </span>
          Show dashboard title
        </label>
      </section>
    </aside>
  );
}

function RankTable({ title, rows, cols }: { title: string; rows: [string, string][]; cols: string }) {
  return (
    <section>
      <h3 className="h-9 border-2 border-[#8f8f84] text-center text-[19px] font-medium leading-8 text-white">{title}</h3>
      <table className="mt-1 w-full table-fixed border-collapse text-[18px] font-medium">
        <colgroup><col className="w-[28px]" /><col /><col className={cols} /></colgroup>
        <tbody>
          {rows.map(([n, v], i) => (
            <tr key={n} className="h-[23px] leading-[21px] text-[#4f9a45]">
              <td className="border border-[#9d9d9d] px-[5px] py-0">{i + 1}</td>
              <td className="border border-[#9d9d9d] px-[5px] py-0">{n}</td>
              <td className="border-2 border-[#d8d8d8] px-[3px] py-0 text-right text-[19px] text-[#e15759]">{v}</td>
            </tr>
          ))}
        </tbody>
      </table>
    </section>
  );
}

function DarkSelect({ label, value }: { label: string; value: string }) {
  return (
    <div className="relative border-2 border-[#b5b5b5] p-[2px]">
      <select aria-label={label} className="block h-[20px] w-full appearance-none rounded-[2px] border border-[#aaa] bg-[#717171] pl-[5px] text-[16px] leading-[18px] text-[#bcbcbc]"><option>{value}</option></select>
      <span className="pointer-events-none absolute inset-y-[2px] right-[2px] flex w-[27px] items-center justify-center border-l border-[#ccc]"><Caret className="text-[#eee]" /></span>
    </div>
  );
}

function Label({ children }: { children: React.ReactNode }) {
  return <h3 className="h-[26px] border border-[#c9c9c9] text-center text-[18px] font-medium leading-6 text-[#e8e8e8]">{children}</h3>;
}

const range = "block w-full appearance-none bg-transparent [&::-webkit-slider-runnable-track]:h-[6px] [&::-webkit-slider-runnable-track]:bg-[#e4e4e4] [&::-webkit-slider-thumb]:-mt-[3px] [&::-webkit-slider-thumb]:size-3 [&::-webkit-slider-thumb]:appearance-none [&::-webkit-slider-thumb]:rounded-full [&::-webkit-slider-thumb]:bg-white";

function MapPanel() {
  return (
    <div className="flex min-w-0 flex-1 flex-col border border-[#a5a5a5] p-[2px]">
      <div className="relative min-h-[400px] flex-1 border border-[#a5a5a5]">
        <div className="absolute inset-[2px]"><WorldMap /></div>
        <span className="absolute bottom-[2px] left-[2px] h-[21px] bg-[#d0d0d0] px-[3px] font-['Liberation_Sans',sans-serif] text-[16px] leading-[21px] text-[#8a8a8a]">© 2020 Mapbox © OpenStreetMap</span>
      </div>
      <div className="flex h-[195px] pl-[3px] pt-[7px]">
        <div className="w-[337px]">
          <RankTable title="Casos" cols="w-[167px]" rows={[["United States", "3,711,464"], ["Brazil", "2,074,860"], ["India", "1,077,618"], ["Russia", "771,546"], ["South Africa", "350,879"]]} />
        </div>
        <div className="ml-[9px] w-[327px]">
          <RankTable title="Decesos" cols="w-[138px]" rows={[["United States", "140,119"], ["Brazil", "78,772"], ["United Kingdom", "45,273"], ["Mexico", "38,888"], ["Italy", "35,042"]]} />
        </div>
        <div className="ml-1 w-[216px]">
          <Label>Selector de Medidas</Label>
          <div className="mt-2"><DarkSelect label="Medida" value="Casos" /></div>
          <div className="mr-1 mt-1 h-[70px] border-2 border-[#c0c0b8] px-1">
            <label htmlFor="topn" className="block whitespace-pre pt-[5px] text-center text-[18px] font-medium leading-6 text-white">{"<--  Rankings Top N"}</label>
            <div className="mt-1 flex items-center gap-2">
              <input id="topn" defaultValue="5" className="h-5 w-[99px] border border-[#555] bg-transparent px-1 text-[17px] text-[#9a9a9a]" />
              <div className="flex-1">
                <input type="range" aria-label="Top N" min={5} max={15} defaultValue={5} className={range} />
                <div className="flex justify-between px-[5px] pt-px">
                  {Array.from({ length: 11 }, (_, i) => <span key={i} className="h-1 w-px bg-[#aaa]" />)}
                </div>
              </div>
            </div>
          </div>
        </div>
      </div>
    </div>
  );
}

function Card({ title, children }: { title: string; children: React.ReactNode }) {
  return (
    <section className="border-b-2 border-white last:border-b-0">
      <h3 className="h-9 bg-white/20 text-center text-[18px] font-medium leading-[34px] text-[#f0f0f0]">{title}</h3>
      {children}
    </section>
  );
}

function Legend({ items, open = false }: { items: [string, string][]; open?: boolean }) {
  return (
    <ul className={open ? "h-[128px] border border-b-0 border-[#8f8f84] pl-1 pt-1 text-[#c4c4c4]" : "h-[157px] border border-[#8f8f84] pl-1 pt-1 text-[#c4c4c4]"}>
      {items.map(([t, c]) => (
        <li key={t} className="flex h-[23px] items-start gap-[6px] text-[16px] leading-[17px]">
          <span className="size-[14px]" style={{ backgroundColor: c }} />{t}
        </li>
      ))}
    </ul>
  );
}

const countries = ["Afghanistan", "Albania", "Algeria", "Andorra", "Angola", "Anguilla", "Antigua and B..", "Argentina", "Armenia", "Aruba"];

function CountryPicker() {
  return (
    <div className="relative -ml-px mt-[5px] flex-1 border-2 border-[#6e6e6e] p-1">
      <div className="absolute -top-[13px] left-[87px] flex h-[13px] w-[50px] flex-col items-center justify-center gap-[2px] bg-[#6e6e6e]">
        <span className="h-[2px] w-10 bg-[#d8d8d8]" /><span className="h-[2px] w-10 bg-[#d8d8d8]" />
      </div>
      <div className="absolute -left-[20px] -top-[2px] flex h-[84px] w-[19px] flex-col items-center justify-between bg-[#6e6e6e] py-1 text-white">
        <button type="button" aria-label="Remove"><X className="block size-4" strokeWidth={2} /></button>
        <button type="button" aria-label="Go to sheet"><ExternalLink className="block size-[14px]" strokeWidth={2} /></button>
        <button type="button" aria-label="Use as filter"><FaFilter className="block size-[13px]" /></button>
        <button type="button" aria-label="More options" className="flex h-3 items-center"><Caret className="text-white" /></button>
      </div>
      <div className="flex h-[209px] items-end">
        <table className="w-[189px] table-fixed border-collapse self-start text-[16px] font-medium text-[#d0d0d0]">
          <colgroup><col /><col className="w-[60px]" /></colgroup>
          <thead>
            <tr className="h-[10px]">
              <th className="border border-[#aaa] p-0"><div className="flex h-[8px] items-end overflow-hidden pl-[6px] text-[16px] font-medium leading-4 text-[#4a4a4a]"><span className="-mb-[4px]">Location</span></div></th>
              <th className="border border-[#aaa] p-0" />
            </tr>
          </thead>
          <tbody>
            {countries.map((c, i) => (
              <tr key={c} className="h-5 leading-[19px]">
                <td className="border border-[#aaa] p-0 pl-[5px]"><label htmlFor={`c${i}`}>{c}</label></td>
                <td className="border-x border-[#ddd] p-0">
                  <input id={`c${i}`} type="radio" name="country" className="mx-auto block size-3 appearance-none rounded-full border-2 border-[#d8d8d8]" />
                </td>
              </tr>
            ))}
            <tr><td colSpan={2} className="border-t border-[#ddd] p-0" /></tr>
          </tbody>
        </table>
        <div className="flex h-[199px] w-[25px] flex-col items-center justify-between bg-[#f0f0f0] py-1 text-[#555]">
          <div className="flex w-full flex-col items-center">
            <ChevronUp className="size-[18px]" strokeWidth={2.5} />
            <div className="mt-[4px] h-[27px] w-full bg-[#cdcdcd]" />
          </div>
          <ChevronDown className="size-[18px]" strokeWidth={2.5} />
        </div>
      </div>
    </div>
  );
}

function FilterColumn() {
  return (
    <div className="ml-[30px] flex w-[225px] shrink-0 flex-col pt-1">
      <Label>Language Picker</Label>
      <div className="mt-2"><DarkSelect label="Language" value="Español" /></div>
      <div className="mt-[10px]"><Label>Selector de Vistas</Label></div>
      <div className="mt-1"><DarkSelect label="Vista" value="Panorama mundial" /></div>
      <div className="mt-[9px]"><Label>Selector de Fecha</Label></div>
      <div className="mt-1 h-[55px] border border-[#aaa] px-[6px]">
        <div className="flex gap-[2px]">
          <button type="button" aria-label="Previous date" className="flex h-5 w-4 items-center justify-center bg-white text-[#44546a]"><svg className="h-3 w-2" viewBox="0 0 8 12" fill="none" stroke="currentColor" strokeWidth="2.500"><path d="M7 1L2 6L7 11" /></svg></button>
          <div className="relative flex-1">
            <select aria-label="Fecha" className="block h-5 w-full appearance-none border border-[#999] bg-[#717171] pl-1 text-[17px] leading-[18px] text-[#bcbcbc]"><option>17/07/2020</option></select>
            <span className="pointer-events-none absolute inset-y-0 right-0 flex w-[27px] items-center justify-center border-l border-[#ccc]"><Caret className="text-[#eee]" /></span>
          </div>
          <button type="button" aria-label="Next date" className="flex h-5 w-4 items-center justify-center bg-white text-[#44546a]"><svg className="h-3 w-2" viewBox="0 0 8 12" fill="none" stroke="currentColor" strokeWidth="2.500"><path d="M1 1L6 6L1 11" /></svg></button>
        </div>
        <input type="range" aria-label="Fecha" defaultValue={98} className={`mt-[13px] ${range}`} />
      </div>
      <div className="mt-[18px]"><Legend items={[["Africa", BLUE], ["Asia", ORG], ["Europe", CORAL], ["North America", TEAL], ["Oceania", GREEN], ["South America", GOLD]]} /></div>
      <div className="mt-4"><Legend open items={[["Argentina", BLUE], ["Brazil", ORG], ["Paraguay", CORAL], ["Uruguay", TEAL], ["Venezuela", GREEN]]} /></div>
      <div className="mx-1 mt-[11px]"><Label>Selector de Países</Label></div>
      <CountryPicker />
    </div>
  );
}

function BottomTabs() {
  const cell = "flex w-8 items-center justify-center border-r border-[#cfcfcf]";
  return (
    <footer className="flex h-10 border-t border-[#d0d0d0] bg-[#e6e6e6] text-[19px] font-light text-[#555]">
      <button type="button" className="flex w-[195px] items-center gap-[6px] border-r border-[#d0d0d0] pl-3 pt-[2px]">
        <svg className="h-3 w-[10px]" viewBox="0 0 10 12" fill="none" stroke="#555"><ellipse cx="5" cy="2.500" rx="4" ry="2" /><path d="M1 2.500V9.500Q1 11.500 5 11.500T9 9.500V2.500" /></svg>
        Data Source
      </button>
      <button type="button" className="flex w-[217px] items-center gap-[6px] whitespace-nowrap border-r border-[#cfcfcf] bg-[#fafafa] pl-[11px] pt-[2px] text-[19px] font-bold">
        <svg className="size-[11px] shrink-0" viewBox="0 0 11 11" fill="none" stroke="#555"><path d="M0.500 0.500H10.500V10.500H0.500ZM5.500 0V11M0 5.500H11" /></svg>
        COVID/19 Dash Test
      </button>
      <button type="button" aria-label="New worksheet" className={cell}><svg className="size-4" viewBox="0 0 16 16" fill="none" stroke="#666"><path d="M8 12.500H1.500V1.500H12.500V8M5 10V8M7 10V6M9 9V5" /><path d="M12.500 9V16M9 12.500H16" strokeWidth="2" /></svg></button>
      <button type="button" aria-label="New dashboard" className={cell}><svg className="size-4" viewBox="0 0 16 16" fill="none" stroke="#666"><path d="M8 12.500H1.500V1.500H12.500V8M7 1.500V12.500M1.500 7H12.500" /><path d="M12.500 9V16M9 12.500H16" strokeWidth="2" /></svg></button>
      <button type="button" aria-label="New story" className={cell}><svg className="size-4" viewBox="0 0 16 16" fill="none" stroke="#666"><path d="M8 11.500L6.500 12.500L1.500 10.500V1.500L6.500 3.500L11.500 1.500V8M6.500 3.500V12.500" /><path d="M12.500 9V16M9 12.500H16" strokeWidth="2" /></svg></button>
    </footer>
  );
}

export default function App() {
  return (
    <div className="flex min-h-screen flex-col bg-white font-['Roboto',sans-serif]">
      <nav className="flex h-8 items-center gap-[15px] px-2 pt-[5px] font-['Noto_Sans',sans-serif] text-[17px] text-[#1a1a1a]">
        {menus.map(([a, b, c]) => (
          <button type="button" key={a + b + c}>{a}<span className="underline underline-offset-2">{b}</span>{c}</button>
        ))}
      </nav>
      <Toolbar />
      <div className="flex flex-1">
        <Sidebar />
        <main className="relative flex min-w-0 flex-1 flex-col bg-black px-2 pb-2 pt-3 font-['Noto_Sans',sans-serif]">
          <QuanamLogo className="absolute left-[904px] top-[355px] h-[184px] w-[164px]" />
          <header className="relative ml-1 mr-1 flex h-[68px] shrink-0 items-center justify-center border-[3px] border-[#858585]">
            <a href="#instrucciones" className="absolute left-[22px] top-1 text-[23px] italic leading-[32px] text-[#d9bf57] underline">Instrucciones de uso</a>
            <h1 className="font-['Lato',sans-serif] text-[57px] font-bold leading-[60px] text-[#cca23f]">COVID-19 Data Analysis Toolkit</h1>
            <QuanamLogo className="absolute right-[24px] top-[7px] h-[41px] w-[37px] brightness-150" />
          </header>
          <div className="relative mt-1 flex flex-1">
            <MapPanel />
            <div className="ml-8 w-[489px] shrink-0 border-2 border-white">
              <Card title="Edad Promedio (Fitro)"><AgeChart /></Card>
              <Card title="Casos por Continente"><ContinentChart /></Card>
              <Card title="Casos Mercosur"><MercosurChart /></Card>
              <Card title="Evoución Movilidad (Uruguay)"><MobilityChart /></Card>
            </div>
            <FilterColumn />
          </div>
        </main>
      </div>
      <BottomTabs />
    </div>
  );
}
